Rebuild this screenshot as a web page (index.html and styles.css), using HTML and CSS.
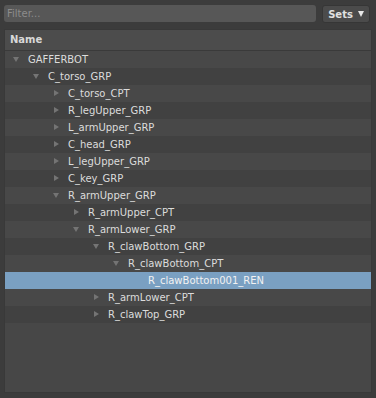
FILE: index.html
```html
<!DOCTYPE html>
<html>
<head>
    <title>Hierarchy</title>
    <link rel="stylesheet" href="styles.css">
</head>
<body>
    <div class="toolbar">
        <input class="filter" type="text" placeholder="Filter...">
        <button class="sets">Sets <span class="caret"></span></button>
    </div>
    <div class="tree">
        <div class="head">Name</div>
        <ul class="rows">
            <li class="d0"><i class="open"></i>GAFFERBOT</li>
            <li class="d1"><i class="open"></i>C_torso_GRP</li>
            <li class="d2"><i class="shut"></i>C_torso_CPT</li>
            <li class="d2"><i class="shut"></i>R_legUpper_GRP</li>
            <li class="d2"><i class="shut"></i>L_armUpper_GRP</li>
            <li class="d2"><i class="shut"></i>C_head_GRP</li>
            <li class="d2"><i class="shut"></i>L_legUpper_GRP</li>
            <li class="d2"><i class="shut"></i>C_key_GRP</li>
            <li class="d2"><i class="open"></i>R_armUpper_GRP</li>
            <li class="d3"><i class="shut"></i>R_armUpper_CPT</li>
            <li class="d3"><i class="open"></i>R_armLower_GRP</li>
            <li class="d4"><i class="open"></i>R_clawBottom_GRP</li>
            <li class="d5"><i class="open"></i>R_clawBottom_CPT</li>
            <li class="d6 selected"><i></i>R_clawBottom001_REN</li>
            <li class="d4"><i class="shut"></i>R_armLower_CPT</li>
            <li class="d4"><i class="shut"></i>R_clawTop_GRP</li>
        </ul>
    </div>
</body>
</html>
```

FILE: styles.css
```css
*{padding: 0;margin: 0;box-sizing: border-box;}
body{
    background: #3c3c3c;
    font-family: "DejaVu Sans", sans-serif;
    font-size: 10px;
    color: #dcdcdc;
}
.toolbar{
    display: flex;
    gap: 6px;
    padding: 5px 6px 0 4px;
    height: 23px;
}
.filter{
    flex: 1;
    height: 17px;
    background: #575757;
    border: none;
    border-radius: 3px;
    padding: 0 3px;
    font-family: "DejaVu Sans", sans-serif;
    font-size: 10px;
    color: #dcdcdc;
    outline: none;
}
.filter::placeholder{color: #8c8c8c;}
.sets{
    width: 48px;
    height: 18px;
    background: #4b4b4b;
    border: 1px solid #363636;
    border-radius: 3px;
    font-family: "DejaVu Sans", sans-serif;
    font-size: 10px;
    font-weight: bold;
    color: #e0e0e0;
    display: flex;
    align-items: center;
    justify-content: center;
    gap: 5px;
}
.caret{
    width: 0;
    height: 0;
    border-left: 3.5px solid transparent;
    border-right: 3.5px solid transparent;
    border-top: 6px solid #e8e8e8;
}
.tree{
    margin: 6px 4px 0 4px;
    height: 364px;
    background: #474747;
    border: 1px solid #393939;
}
.head{
    height: 21px;
    line-height: 20px;
    padding-left: 5px;
    font-weight: bold;
    color: #d8d8d8;
    background: #4c4c4c;
    border-bottom: 1px solid #3a3a3a;
}
ul{list-style: none;}
.rows li{
    height: 17px;
    line-height: 17px;
    display: flex;
    align-items: center;
    white-space: nowrap;
}
.rows li:nth-child(odd){background: #484848;}
.rows li:nth-child(even){background: #414141;}
.rows li.selected{background: #7aa0c2;color: #f2f2f2;}
.rows i{
    display: block;
    width: 15px;
    height: 7px;
    position: relative;
}
.rows i.open:after{
    content: '';
    position: absolute;
    left: 0;
    top: 1px;
    border-left: 3.5px solid transparent;
    border-right: 3.5px solid transparent;
    border-top: 5px solid #747474;
}
.rows i.shut:after{
    content: '';
    position: absolute;
    left: 1px;
    top: 0;
    border-top: 3.5px solid transparent;
    border-bottom: 3.5px solid transparent;
    border-left: 5px solid #747474;
}
.d0{padding-left: 8px;}
.d1{padding-left: 28px;}
.d2{padding-left: 48px;}
.d3{padding-left: 68px;}
.d4{padding-left: 88px;}
.d5{padding-left: 108px;}
.d6{padding-left: 128px;}
```
